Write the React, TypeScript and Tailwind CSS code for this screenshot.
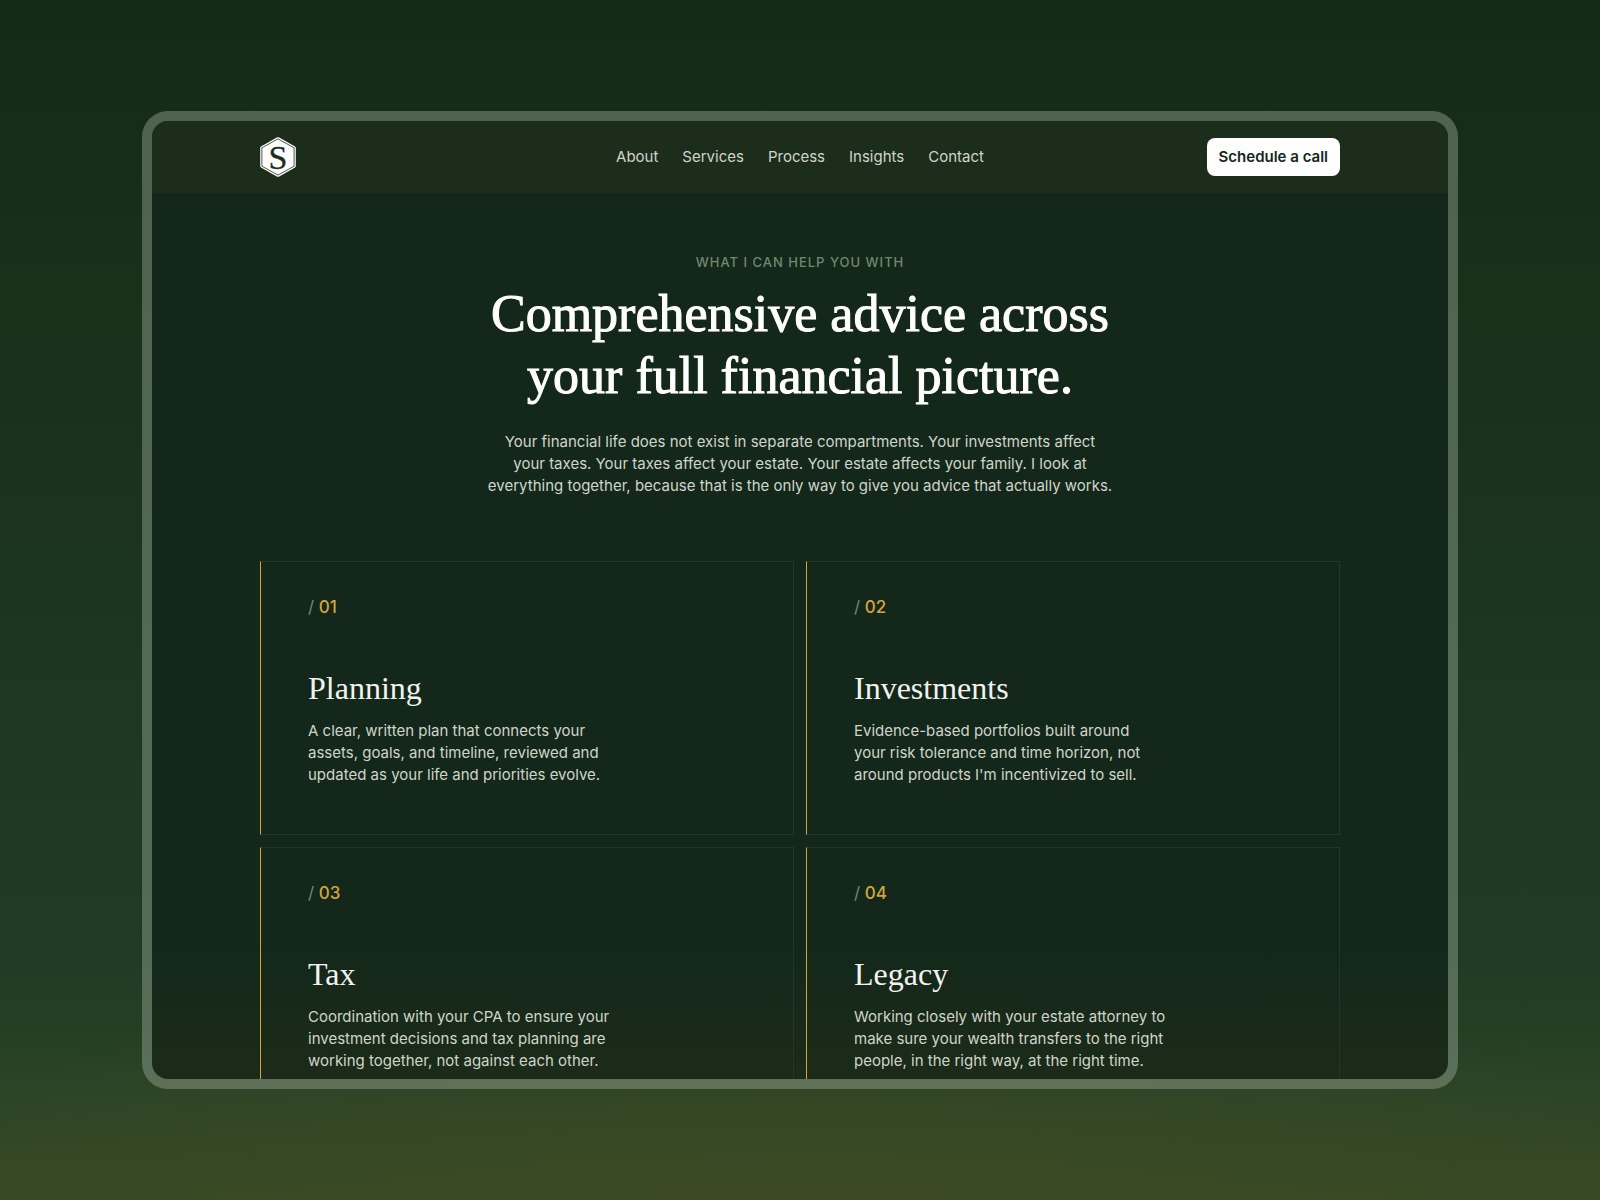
const links = ["About", "Services", "Process", "Insights", "Contact"];

const services = [
  {
    number: "01",
    title: "Planning",
    lines: [
      "A clear, written plan that connects your",
      "assets, goals, and timeline, reviewed and",
      "updated as your life and priorities evolve.",
    ],
  },
  {
    number: "02",
    title: "Investments",
    lines: [
      "Evidence-based portfolios built around",
      "your risk tolerance and time horizon, not",
      "around products I'm incentivized to sell.",
    ],
  },
  {
    number: "03",
    title: "Tax",
    lines: [
      "Coordination with your CPA to ensure your",
      "investment decisions and tax planning are",
      "working together, not against each other.",
    ],
  },
  {
    number: "04",
    title: "Legacy",
    lines: [
      "Working closely with your estate attorney to",
      "make sure your wealth transfers to the right",
      "people, in the right way, at the right time.",
    ],
  },
];

const intro = [
  "Your financial life does not exist in separate compartments. Your investments affect",
  "your taxes. Your taxes affect your estate. Your estate affects your family. I look at",
  "everything together, because that is the only way to give you advice that actually works.",
];

function Logo() {
  return (
    <svg width="36" height="40" viewBox="0 0 36 40" role="img" aria-label="Home">
      <path d="M18 .2Q18.6 .2 19.2 .5L34.6 9.2Q35.8 9.9 35.8 11.3V28.7Q35.8 30.1 34.6 30.8L19.2 39.5Q18 40.1 16.8 39.5L1.4 30.8Q.2 30.1 .2 28.7V11.3Q.2 9.9 1.4 9.2L16.8 .5Q17.4 .2 18 .2Z" fill="#fff" />
      <path d="M18 1.9 34.1 10.8V29.2L18 38.1 1.9 29.2V10.8Z" fill="none" stroke="#1c2d1b" strokeWidth=".8" />
      <text
        x="18"
        y="32"
        textAnchor="middle"
        fontSize="34"
        fill="#1c2d1b"
        stroke="#1c2d1b"
        strokeWidth=".3"
        className="font-['Liberation_Serif',serif]"
      >
        S
      </text>
    </svg>
  );
}

function Lines({ lines }: { lines: string[] }) {
  return (
    <>
      {lines.map((line) => (
        <span key={line} className="block">{line}</span>
      ))}
    </>
  );
}

export default function App() {
  return (
    <div className="h-screen px-[142px] py-[111px] font-['Inter',sans-serif] bg-[radial-gradient(ellipse_70%_16%_at_50%_100%,#3b4a25_0%,#3b4a2500_100%),linear-gradient(to_bottom,#152a17_0%,#193019_25%,#1c351f_50%,#203b24_80%,#2a4326_91%,#364a24_100%)]">
      <div className="h-full rounded-[26px] border-10 border-[#a5b5a566] bg-clip-padding overflow-hidden bg-[linear-gradient(to_bottom,#13281a_0%,#13281a_86%,#1c2b19_100%)]">
        {/* Top bar */}
        <header className="bg-[#1c2d1b]">
          <div className="max-w-[1080px] h-18 mx-auto grid grid-cols-[1fr_auto_1fr] items-center">
            <a href="#" className="justify-self-start">
              <Logo />
            </a>
            <nav className="flex gap-6">
              {links.map((link) => (
                <a key={link} href={`#${link.toLowerCase()}`} className="text-[15px] leading-[22px] text-[#d0d5ca]">
                  {link}
                </a>
              ))}
            </nav>
            <button type="button" className="justify-self-end h-[38px] px-3 rounded-lg bg-white text-[15px] leading-[22px] font-semibold text-[#13281a]">
              Schedule a call
            </button>
          </div>
        </header>

        {/* Services */}
        <section id="services" className="max-w-[1080px] mx-auto pt-[60px]">
          <div className="text-center">
            <p className="text-[13px] leading-[18px] font-medium uppercase tracking-[1px] text-[#708a6d]">
              What I can help you with
            </p>
            <h1 className="mt-3 text-[52px] leading-[62px] text-white font-['Liberation_Serif',serif] [-webkit-text-stroke:1px_#fff]">
              Comprehensive advice across
              <br />
              your full financial picture.
            </h1>
            <p className="mt-6 text-[15px] leading-[22px] text-[#d0d5ca]">
              <Lines lines={intro} />
            </p>
          </div>

          <div className="mt-16 grid grid-cols-2 gap-3">
            {services.map((s) => (
              <article key={s.number} className="h-[274px] pt-8 px-[47px] border border-[#233729] border-l-[#d6a53a]">
                <p className="text-[17px] leading-[26px] font-medium text-[#d6a53a]">
                  <span className="font-normal text-[#708a6d]">/</span> {s.number}
                </p>
                <h2 className="mt-12 text-[32px] leading-10 text-[#f2f2ee] font-['Liberation_Serif',serif]">{s.title}</h2>
                <p className="mt-3 text-[15px] leading-[22px] text-[#d0d5ca]">
                  <Lines lines={s.lines} />
                </p>
              </article>
            ))}
          </div>
        </section>
      </div>
    </div>
  );
}
